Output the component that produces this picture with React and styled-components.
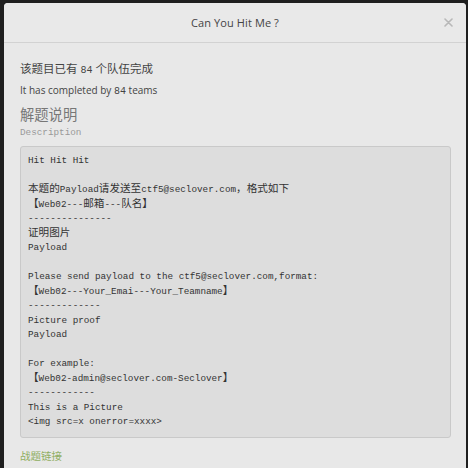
import React from "react";
import styled, { createGlobalStyle } from "styled-components";

const Global = createGlobalStyle`
  html, body { margin: 0; padding: 0; background: #1d1d1d; }
  body { width: 468px; height: 468px; overflow: hidden; }
`;

const Page = styled.div`
  width: 468px;
  height: 468px;
  box-sizing: border-box;
  padding: 3px 2px 0 4px;
  background: #1f1f1f;
  overflow: hidden;
`;

const Modal = styled.div`
  width: 462px;
  height: 465px;
  background: #e8e8e8;
  border-radius: 4px 4px 0 0;
  overflow: hidden;
  font-family: "Open Sans", "Noto Sans CJK SC", sans-serif;
`;

const Header = styled.div`
  height: 39px;
  border-bottom: 1px solid #d2d2d2;
  display: grid;
  grid-template-columns: 1fr auto 1fr;
  align-items: center;
  background: #e9e9e9;
`;

const Title = styled.div`
  grid-column: 2;
  font-size: 11px;
  color: #444;
  letter-spacing: 0.1px;
`;

const Close = styled.div`
  grid-column: 3;
  justify-self: end;
  padding-right: 13px;
  display: flex;
  align-items: center;
`;

const Body = styled.div`
  padding: 17px 15px 0 16px;
`;

const Stat = styled.div`
  font-size: ${(p) => p.$size}px;
  line-height: ${(p) => p.$lh}px;
  height: ${(p) => p.$lh}px;
  color: #444;
  margin-top: ${(p) => p.$mt || 0}px;
`;

const Num = styled.span`
  font-family: "Liberation Mono", monospace;
  font-size: 10px;
`;

const Heading = styled.div`
  margin-top: 7px;
  font-size: 14.3px;
  line-height: 20px;
  height: 20px;
  color: #777;
`;

const Sub = styled.div`
  margin-top: 1px;
  font-family: "Liberation Mono", monospace;
  font-size: 9.3px;
  line-height: 13px;
  color: #999;
`;

const Pre = styled.div`
  margin-top: 7px;
  padding: 7px;
  background: #dddddd;
  border: 1px solid #c9c9c9;
  border-radius: 3px;
  font-family: "Liberation Mono", "Noto Sans CJK SC", monospace;
  font-size: 9.3px;
  color: #333;
`;

const Line = styled.div`
  height: 14.5px;
  line-height: 14.5px;
  white-space: pre;
  overflow: visible;
`;

const Cjk = styled.span`
  font-family: "Noto Sans CJK SC", sans-serif;
  font-size: 10.6px;
  line-height: 10px;
`;

const Link = styled.a`
  display: block;
  margin-top: 10px;
  font-size: 10.5px;
  line-height: 17px;
  color: #8fae62;
  text-decoration: none;
`;

const lines = [
  "Hit Hit Hit",
  "",
  "本题的Payload请发送至ctf5@seclover.com，格式如下",
  "【Web02---邮箱---队名】",
  "---------------",
  "证明图片",
  "Payload",
  "",
  "Please send payload to the ctf5@seclover.com,format:",
  "【Web02---Your_Emai---Your_Teamname】",
  "-------------",
  "Picture proof",
  "Payload",
  "",
  "For example:",
  "【Web02-admin@seclover.com-Seclover】",
  "------------",
  "This is a Picture",
  "<img src=x onerror=xxxx>",
];

const CJK_RE = /([\u3000-\u303f\u4e00-\u9fff\uff00-\uffef]+)/;

function renderLine(line) {
  return line
    .split(CJK_RE)
    .map((p, i) => (i % 2 === 1 ? <Cjk key={i}>{p}</Cjk> : p));
}

export default function App() {
  return (
    <>
      <Global />
      <Page>
        <Modal>
          <Header>
            <Title>Can You Hit Me ?</Title>
            <Close>
              <svg width="9" height="9" viewBox="0 0 9 9">
                <path d="M1 1L8 8M8 1L1 8" stroke="#b8b8b8" strokeWidth="1.6" strokeLinecap="round" />
              </svg>
            </Close>
          </Header>
          <Body>
            <Stat $size={11.5} $lh={17}>
              该题目已有 <Num>84</Num> 个队伍完成
            </Stat>
            <Stat $size={10} $lh={15} $mt={6}>
              It has completed by <Num>84</Num> teams
            </Stat>
            <Heading>解题说明</Heading>
            <Sub>Description</Sub>
            <Pre>
              {lines.map((l, i) => (
                <Line key={i}>{renderLine(l)}</Line>
              ))}
            </Pre>
            <Link href="#">战题链接</Link>
          </Body>
        </Modal>
      </Page>
    </>
  );
}
